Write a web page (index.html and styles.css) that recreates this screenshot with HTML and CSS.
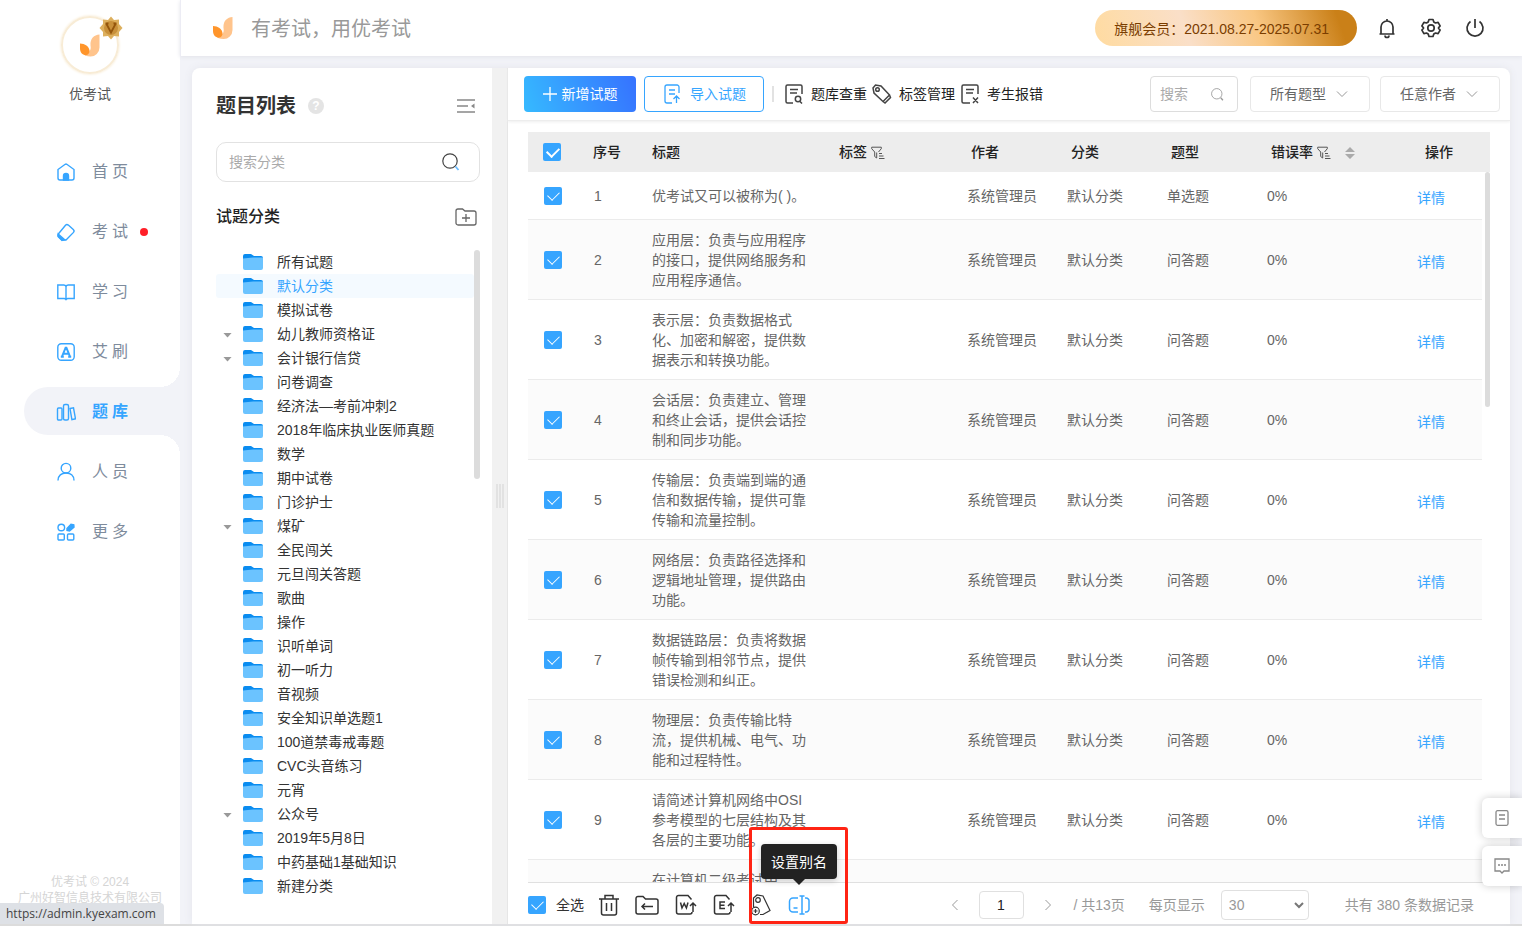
FILE: index.html
```html
<!DOCTYPE html>
<html lang="zh-CN">
<head>
<meta charset="utf-8">
<title>优考试 - 题库</title>
<link rel="stylesheet" href="styles.css">
</head>
<body>
<svg class="defs" aria-hidden="true">
  <symbol id="logo" viewBox="0 0 20 22"><path d="M19.500 0v13a9 9 0 0 1-9.200 9C7 22 4 21 3 19c6 .5 8.500-3 7.500-8C10 4 14 .5 19.500 0z" fill="#ffc48c"/><path d="M0 9c5 0 9 3 9.500 7 .2 2-.8 4-3 4.600C2.500 21 0 18 0 14z" fill="#ff952b"/></symbol>
  <symbol id="folder" viewBox="0 0 20 16"><path d="M0 2a2 2 0 0 1 2-2h6l3 2h7a2 2 0 0 1 2 2v5H0z" fill="#0a8cf0"/><path d="M0 4.500L10 3.500H20V14a2 2 0 0 1-2 2H2a2 2 0 0 1-2-2z" fill="#6bc3ff"/></symbol>
  <symbol id="filter" viewBox="0 0 14 14"><path d="M.7 1.200h9.600v1.500L7.500 6M.7 1.200v1.500l3 3.300v4.500l2 1.500V6.500M8 7.500h3M8 10h4.500M8 12.500h5.500" fill="none" stroke="#555"/></symbol>
  <symbol id="chevron" viewBox="0 0 12 12"><path d="M1 3.500l5 5 5-5" fill="none" stroke="#999"/></symbol>
  <symbol id="search" viewBox="0 0 18 18"><circle cx="8" cy="8" r="7.200" fill="none" stroke="currentColor" stroke-width="1.200"/><path d="M13.500 13.500l3 3.500" stroke="var(--handle, currentColor)" stroke-width="1.800"/></symbol>
</svg>
<div class="app">
  <aside class="sidebar">
    <div class="profile">
      <div class="avatar">
        <svg class="avatar-logo"><use href="#logo"/></svg>
        <svg class="badge" viewBox="0 0 24 24"><path d="M12 .5l3 3.500 5-.5v4.500l3.500 4-3.500 4v4.500l-5-.5-3 3.500-3-3.500-5 .5V16L.5 12 4 8V3.500l5 .5z" fill="#ddb05e"/><circle cx="12" cy="12" r="7" fill="#c8903a"/><path d="M7.500 8l4.500 8.500L16.500 8M6.500 7.500h3M14.500 7.500h3" fill="none" stroke="#94560c" stroke-width="1.800"/></svg>
      </div>
      <span class="profile-name">优考试</span>
    </div>
    <nav class="nav">
      <a href="#" class="nav-item"><svg viewBox="0 0 20 20"><path d="M2 7.500v8.500a2 2 0 0 0 2 2h12a2 2 0 0 0 2-2V7.500L10.800 2.300a1.500 1.500 0 0 0-1.600 0z"/><path d="M7.500 18v-4a2.500 2.500 0 0 1 5 0v4z" class="solid"/></svg><span>首页</span></a>
      <a href="#" class="nav-item"><svg viewBox="0 0 20 20"><path d="M9.500 3.300a2 2 0 0 1 2.800-.2l5 4.500a2 2 0 0 1 .2 2.800L10 18H6l-3.500-3.500a2 2 0 0 1 0-2.700z"/><path d="M2.200 12l6.500 5.700L6 18.500 2 14.500z" class="solid"/></svg><span>考试</span><i class="dot"></i></a>
      <a href="#" class="nav-item"><svg viewBox="0 0 20 20"><path d="M1.800 3h5.700A2.500 2.500 0 0 1 10 4.500 2.500 2.500 0 0 1 12.500 3h5.700v13.500h-5.700a2.500 2.500 0 0 0-2.500 1 2.500 2.500 0 0 0-2.500-1H1.800zM10 4.500V18"/></svg><span>学习</span></a>
      <a href="#" class="nav-item"><svg viewBox="0 0 20 20"><rect x="1.800" y="1.800" width="16.400" height="16.400" rx="3.500"/><path d="M6 14.700l3.600-9h.8l3.600 9M7.300 11.700h5.400M4.800 14.700h3M12.200 14.700h3" stroke-width="2"/></svg><span>艾刷</span></a>
      <a href="#" class="nav-item active"><svg viewBox="0 0 20 20"><rect x="1.500" y="6" width="4.500" height="12" rx="1"/><rect x="7.500" y="2.500" width="5" height="15.500" rx="1.500"/><path d="M14 6.500l3.500-.7 2 11-3.600.9z"/></svg><span>题库</span></a>
      <a href="#" class="nav-item"><svg viewBox="0 0 20 20"><circle cx="10" cy="6.200" r="4.800"/><path d="M2 18.500c0-5 3.500-7.500 8-7.500s8 2.500 8 7.500"/></svg><span>人员</span></a>
      <a href="#" class="nav-item"><svg viewBox="0 0 20 20"><circle cx="5.300" cy="5.500" r="3.300"/><rect x="2" y="12" width="6.300" height="6" rx="1"/><rect x="11.500" y="12" width="6.300" height="6" rx="1"/><path d="M11 6.500L15 2.300l2.800.5.2 2.400L13.500 9 11 8.500z" class="solid"/></svg><span>更多</span></a>
    </nav>
    <footer class="copyright">优考试 © 2024<br>广州好智信息技术有限公司</footer>
  </aside>

  <header class="topbar">
    <svg class="top-logo"><use href="#logo"/></svg>
    <span class="slogan">有考试，用优考试</span>
    <span class="member">旗舰会员：2021.08.27-2025.07.31</span>
    <button class="top-icon" aria-label="通知"><svg viewBox="0 0 22 22"><path d="M5 16.500V10a6 6 0 0 1 12 0v6.500M3.500 17h15M11 2v2M9 18.500a2 2 0 0 0 4 0"/></svg></button>
    <button class="top-icon" aria-label="设置"><svg viewBox="0 0 22 22"><path d="M9 2.500h4l.8 2.500 1.700 1 2.600-.6 2 3.500L18.400 11l1.700 2.100-2 3.500-2.600-.6-1.700 1-.8 2.500H9L8.200 17l-1.700-1-2.600.6-2-3.500L3.600 11 1.900 8.900l2-3.500 2.600.6 1.700-1z" stroke-linejoin="round"/><circle cx="11" cy="11" r="3.200"/></svg></button>
    <button class="top-icon" aria-label="退出"><svg viewBox="0 0 22 22"><path d="M11 2V11M6.500 4.500a8 8 0 1 0 9 0"/></svg></button>
  </header>

  <main class="workspace">
    <section class="tree-panel">
      <div class="panel-title"><h1>题目列表</h1><button class="help" aria-label="帮助">?</button>
        <button class="plain push" aria-label="收起"><svg class="i20" viewBox="0 0 20 20"><path d="M1 4h18M1 10h11M1 16h18" stroke="#888" stroke-width="1.500"/><path d="M18.500 7.500v5L15 10z" fill="#888"/></svg></button></div>
      <label class="tree-search"><input type="text" placeholder="搜索分类" aria-label="搜索分类"><svg><use href="#search"/></svg></label>
      <div class="sub-title"><h2>试题分类</h2><button class="plain" aria-label="新建分类"><svg class="i22" viewBox="0 0 22 18"><path d="M1 3a2 2 0 0 1 2-2h4.500l2.500 2h9a2 2 0 0 1 2 2V15a2 2 0 0 1-2 2H3a2 2 0 0 1-2-2zM11 6v8M7 10h8" fill="none" stroke="#666" stroke-width="1.300"/></svg></button></div>
      <div class="tree-wrap">
        <ul class="tree" id="tree"></ul>
        <i class="thumb tree-thumb"></i>
      </div>
    </section>
    <div class="splitter"><i></i><i></i><i></i></div>
    <section class="list-panel">
      <div class="toolbar">
        <button class="btn primary"><svg class="i14" viewBox="0 0 14 14"><path d="M7 0v14M0 7h14" stroke="#fff" stroke-width="1.300"/></svg>新增试题</button>
        <button class="btn outline"><svg class="i20" viewBox="0 0 20 20"><path d="M17 9V3a2 2 0 0 0-2-2H5a2 2 0 0 0-2 2v14a2 2 0 0 0 2 2h5M7 6h6M7 10h6M14.500 19v-7M11.500 15l3-3 3 3" fill="none" stroke="#36a5ff" stroke-width="1.300"/></svg>导入试题</button>
        <i class="divider"></i>
        <button class="tool"><svg class="i20" viewBox="0 0 20 20"><path d="M18 10V2.500A1.500 1.500 0 0 0 16.500 1h-13A1.500 1.500 0 0 0 2 2.500v15A1.500 1.500 0 0 0 3.500 19H9M6 5.500h8M6 9h7M15.500 17l2.500 2.500" /><circle cx="14" cy="15" r="2.700"/></svg>题库查重</button>
        <button class="tool"><svg class="i20" viewBox="0 0 20 20"><path d="M1 4l2.500-3L9 2l8.500 9L11 17.500 2 9zM17.500 11l1 2.500-5.500 5.500-2-1.500"/><circle cx="5.500" cy="5.500" r="1.800"/></svg>标签管理</button>
        <button class="tool"><svg class="i20" viewBox="0 0 20 20"><path d="M18 10V2.500A1.500 1.500 0 0 0 16.500 1h-13A1.500 1.500 0 0 0 2 2.500v15A1.500 1.500 0 0 0 3.500 19H10M6 5.500h8M6 9h7M13 13.500l5 5.500M18 13.500L13 19"/></svg>考生报错</button>
        <label class="field small"><input type="text" placeholder="搜索" aria-label="搜索"><svg><use href="#search"/></svg></label>
        <label class="field"><select aria-label="题型"><option>所有题型</option></select><svg><use href="#chevron"/></svg></label>
        <label class="field last"><select aria-label="作者"><option>任意作者</option></select><svg><use href="#chevron"/></svg></label>
      </div>
      <div class="table-wrap">
        <table>
          <colgroup><col class="c-check"><col class="c-no"><col class="c-title"><col><col class="c-std"><col class="c-std"><col class="c-std"><col class="c-rate"><col class="c-op"><col class="c-gutter"></colgroup>
          <thead><tr><th class="check"><input type="checkbox" checked aria-label="选择本页"></th><th>序号</th><th>标题</th><th>标签 <svg class="filter"><use href="#filter"/></svg></th><th class="in">作者</th><th class="in">分类</th><th class="in">题型</th><th class="in">错误率 <svg class="filter"><use href="#filter"/></svg><svg class="sort" viewBox="0 0 10 12"><path d="M5 0l5 5H0zM5 12L0 7h10z" fill="#aaa"/></svg></th><th class="in2">操作</th><th></th></tr></thead>
          <tbody id="rows"></tbody>
        </table>
        <i class="thumb table-thumb"></i>
      </div>
      <div class="footer">
        <label class="all"><input type="checkbox" checked>全选</label>
        <button class="act" aria-label="删除"><svg viewBox="0 0 24 24"><path d="M2 6h20M8 6V2.500h8V6M4.500 6v14a2 2 0 0 0 2 2h11a2 2 0 0 0 2-2V6M9.500 10v8M14.500 10v8"/></svg></button>
        <button class="act" aria-label="移动"><svg viewBox="0 0 24 24"><path d="M1 5.500a2 2 0 0 1 2-2h5L10.500 6H21a2 2 0 0 1 2 2v11a2 2 0 0 1-2 2H3a2 2 0 0 1-2-2zM7 13.500h11M10 10.500l-3 3 3 3"/></svg></button>
        <button class="act" aria-label="导出 Word"><svg viewBox="0 0 24 24"><path d="M18.500 6.500L15 2.500H5.500a2 2 0 0 0-2 2V19a2 2 0 0 0 2 2H17a2 2 0 0 0 2-2M20 19v-9M17 13l3-3 3 3M7.500 9.500l1.500 5.500 2.200-4.500 2.200 4.500L15 9.500"/></svg></button>
        <button class="act" aria-label="导出 Excel"><svg viewBox="0 0 24 24"><path d="M18.500 6.500L15 2.500H5.500a2 2 0 0 0-2 2V19a2 2 0 0 0 2 2H17a2 2 0 0 0 2-2M20 19v-9M17 13l3-3 3 3M14 9H9v6.500h5M9 12.200h4.500"/></svg></button>
        <button class="act thin" aria-label="设置标签"><svg viewBox="0 0 24 24"><path d="M4.500 14V5L8 2l6 1 7 14.500L14 21.500h-3"/><circle cx="9" cy="7" r="2.300"/><circle cx="6.500" cy="18" r="3.800"/><path d="M6.500 16v4M4.500 18h4"/></svg></button>
        <button class="act on" aria-label="设置别名"><svg viewBox="0 0 24 24"><path d="M11 5H6a3.500 3.500 0 0 0-3.500 3.500v7A3.500 3.500 0 0 0 6 19h5M6.500 15h4M18 5h1a3 3 0 0 1 3 3.500v7a3 3 0 0 1-3 3.500h-1M15 3v18M12.500 3h5M12.500 21h5"/></svg><span class="tooltip">设置别名</span><i class="mark"></i></button>
        <div class="pager">
          <button class="plain" aria-label="上一页"><svg class="i12 prev"><use href="#chevron"/></svg></button>
          <input class="page" type="text" value="1" aria-label="页码">
          <button class="plain" aria-label="下一页"><svg class="i12 next"><use href="#chevron"/></svg></button>
          <span class="pages">/ 共13页</span>
          <label class="size">每页显示<span class="size-box"><select><option>30</option></select><svg viewBox="0 0 10 10"><path d="M1 3l4 4 4-4" fill="none" stroke="#777" stroke-width="2"/></svg></span></label>
          <span class="total">共有 380 条数据记录</span>
        </div>
      </div>
    </section>
  </main>
</div>
<div class="float">
  <button aria-label="文档"><svg viewBox="0 0 16 16"><rect x="2" y=".7" width="12" height="14.600" rx="1.500"/><path d="M5 5h6M5 9h6"/></svg></button>
  <button aria-label="消息"><svg viewBox="0 0 16 16"><path d="M1 1h14v12h-5l-2 2-2-2H1zM4 7h2M7 7h2M10 7h2"/></svg></button>
</div>
<div class="status">https://admin.kyexam.com</div>
<script src="app.js"></script>
</body>
</html>
```
FILE: styles.css
```css
* { box-sizing: border-box; }
body { margin: 0; height: 100vh; overflow: hidden; background: #dcdcdc; color: #333; font: 14px/20px "Liberation Sans", "Noto Sans CJK SC", sans-serif; }
button, input, select { font: inherit; color: inherit; margin: 0; }
button { border: 0; padding: 0; background: none; cursor: pointer; }
a { text-decoration: none; color: #36a5ff; }
h1, h2, ul { margin: 0; padding: 0; }
svg { display: block; flex: none; }
.defs { position: absolute; width: 0; height: 0; }
.i12 { width: 12px; height: 12px; }
.i14 { width: 14px; height: 14px; }
.i20 { width: 20px; height: 20px; }
.i22 { width: 22px; height: 18px; }

.app { display: grid; grid-template: 56px 1fr / 180px 1fr; height: calc(100vh - 2px); background: #f2f3f8; }

.sidebar { grid-row: 1 / 3; display: flex; flex-direction: column; background: #fff; min-height: 0; }
.profile { display: flex; flex-direction: column; align-items: center; gap: 10px; padding-top: 16px; height: 147px; }
.avatar { position: relative; display: grid; place-items: center; width: 58px; height: 58px; border: 2px solid #f8ecd6; border-radius: 50%; box-shadow: 0 0 2px 1px #fbf3e4; }
.avatar-logo { width: 20px; height: 25px; }
.badge { position: absolute; top: -2px; right: -6px; width: 24px; height: 24px; }
.profile-name { color: #555; }
.nav { display: flex; flex-direction: column; gap: 12px; }
.nav-item { position: relative; display: flex; align-items: center; height: 48px; margin-left: 24px; padding: 2px 0 0 32px; border-radius: 24px 0 0 24px; color: #7e8b9c; font-size: 16px; letter-spacing: 4px; }
.nav-item svg { width: 20px; height: 20px; margin-right: 16px; fill: none; stroke: #36a5ff; stroke-width: 1.400; }
.nav-item .solid { fill: #36a5ff; }
.nav-item.active { background: #f2f3f8; color: #36a5ff; font-weight: 700; }
.nav-item.active::before, .nav-item.active::after { content: ""; position: absolute; right: 0; width: 20px; height: 20px; }
.nav-item.active::before { top: -20px; background: radial-gradient(circle at 0 0, #fff 20px, #f2f3f8 20px); }
.nav-item.active::after { bottom: -20px; background: radial-gradient(circle at 0 100%, #fff 20px, #f2f3f8 20px); }
.dot { width: 8px; height: 8px; margin-left: 8px; border-radius: 50%; background: #ff1f28; }
.copyright { margin-top: auto; padding-bottom: 18px; color: #d5d5d5; font-size: 12px; line-height: 16px; text-align: center; white-space: nowrap; }

.topbar { display: flex; align-items: center; padding: 0 36px 0 32px; background: #fff; border-left: 1px solid #ececf4; box-shadow: 0 1px 4px #e2e3ea; z-index: 1; }
.top-logo { width: 20px; height: 22px; }
.slogan { margin: 2px 0 0 18px; font-size: 20px; line-height: 28px; color: #999; }
.member { margin-left: auto; margin-right: 19px; padding: 2px 28px 0 19px; border-radius: 18px; line-height: 34px; color: #7a3d00; background: linear-gradient(70deg, #ffdba0, #fadfc8 35%, #f9c783 62%, #ca8018 92%); white-space: nowrap; }
.top-icon { width: 22px; height: 22px; margin-right: 22px; }
.top-icon:last-child { margin-right: 0; }
.top-icon svg { width: 22px; height: 22px; fill: none; stroke: #333; stroke-width: 1.700; }

.workspace { display: flex; min-width: 0; min-height: 0; margin: 12px 12px 0; border-radius: 8px 8px 0 0; background: #fff; box-shadow: 0 0 8px #e4e5ec; }
.tree-panel { display: flex; flex-direction: column; flex: none; width: 300px; min-height: 0; padding: 0 12px 0 24px; }
.panel-title { display: flex; align-items: center; height: 74px; padding-top: 2px; }
h1 { font-size: 20px; line-height: 28px; }
.help { width: 16px; height: 16px; margin-left: 12px; border-radius: 50%; background: #e4e4e4; color: #fff; font-size: 12px; line-height: 16px; font-weight: 700; }
.push { margin-left: auto; margin-right: 4px; }
.tree-search { display: flex; align-items: center; height: 40px; padding: 0 19px 0 12px; border: 1px solid #e2e2e2; border-radius: 10px; }
input[type="text"] { min-width: 0; flex: 1; border: 0; padding: 0; outline: 0; background: none; }
input::placeholder { color: #aaa; opacity: 1; }
.tree-search svg { width: 18px; height: 18px; color: #444; --handle: #6bbcff; }
.sub-title { display: flex; align-items: center; justify-content: space-between; height: 68px; padding: 2px 3px 0 0; }
h2 { font-size: 16px; line-height: 24px; font-weight: 500; color: #222; }
.tree-wrap { position: relative; flex: 1; min-height: 0; }
.tree { list-style: none; margin-right: 6px; }
.tree li { display: flex; align-items: center; height: 24px; padding-left: 27px; border-radius: 3px; white-space: nowrap; }
.tree li.selected { background: #f4faff; }
.tree li a { display: flex; align-items: center; gap: 14px; color: #333; }
.tree li.selected a { color: #36a5ff; }
.tree a svg { width: 20px; height: 16px; }
.tree .toggle { width: 9px; height: 5px; margin: 2px 11px 0 -20px; background: #999; clip-path: polygon(0 0, 100% 0, 50% 100%); }
.thumb { position: absolute; border-radius: 3px; background: #dcdcdc; }
.tree-thumb { top: 0; right: 0; width: 6px; height: 34%; }
.splitter { display: flex; align-items: center; justify-content: center; gap: 1px; flex: none; width: 16px; background: #f1f1f1; border-right: 1px solid #e6e6e6; }
.splitter i { width: 2px; height: 24px; background: #e2e2e2; }

.list-panel { display: flex; flex-direction: column; flex: 1; min-width: 0; min-height: 0; }
.toolbar { display: flex; align-items: center; flex: none; height: 53px; padding: 0 10px 0 16px; border-bottom: 1px solid #ededed; box-shadow: 0 1px 3px #eee; white-space: nowrap; }
.btn { display: flex; align-items: center; justify-content: center; height: 36px; border-radius: 4px; }
.btn.primary { width: 112px; margin-right: 8px; gap: 5px; color: #fff; background: linear-gradient(70deg, #36baff, #3672ff); }
.btn.outline { width: 120px; gap: 8px; color: #36a5ff; border: 1px solid #36a5ff; }
.divider { width: 2px; height: 16px; margin: 0 10px 0 8px; background: #e2e2e2; }
.tool { display: flex; align-items: center; gap: 7px; margin-right: 5px; color: #222; }
.tool svg { fill: none; stroke: #444; stroke-width: 1.500; }
.field { position: relative; display: flex; align-items: center; width: 120px; height: 36px; margin-left: 10px; border: 1px solid #e8e8e8; border-radius: 4px; color: #666; }
.field.small { width: 88px; margin-left: auto; margin-right: 2px; padding: 0 13px 0 9px; border-color: #ddd; }
.field.small svg { width: 13px; height: 13px; color: #999; }
.field select { width: 100%; height: 100%; padding: 0 0 0 19px; border: 0; background: none; appearance: none; outline: 0; }
.field select + svg { position: absolute; right: 21px; width: 12px; height: 12px; pointer-events: none; }

.table-wrap { position: relative; flex: 1; min-height: 0; margin: 11px 20px 0; overflow: hidden; }
table { width: 100%; border-collapse: separate; border-spacing: 0; table-layout: fixed; }
.c-check { width: 65px; } .c-no { width: 59px; } .c-title { width: 187px; } .c-std { width: 100px; } .c-rate { width: 150px; } .c-op { width: 65px; } .c-gutter { width: 8px; }
th, td { padding: 0; text-align: left; white-space: nowrap; }
thead tr { height: 40px; background: #ededed; }
th { font-weight: 500; color: #222; }
th.in { padding-left: 4px; }
th.in2 { padding-left: 8px; }
th svg { display: inline-block; vertical-align: middle; }
.filter { width: 14px; height: 14px; }
.sort { width: 10px; height: 12px; margin-left: 14px; }
tbody tr { height: 48px; }
td { padding: 10px 0 9px; color: #666; }
td:not(:last-child) { border-bottom: 1px solid #ebebeb; }
tbody tr:nth-child(even) td:not(:last-child) { background: #fbfbfb; }
td:nth-child(2) { padding-left: 1px; }
td:nth-child(3) { padding-right: 26px; white-space: normal; }
td a { display: inline-block; padding-top: 4px; }
input[type="checkbox"] { appearance: none; display: block; width: 18px; height: 18px; border-radius: 2px; background: #36a5ff; }
input[type="checkbox"]::before { content: ""; display: block; width: 10px; height: 6px; margin: 4px 0 0 4px; border: solid #fff; border-width: 0 0 1px 1px; rotate: -45deg; }
th.check { padding-left: 15px; }
th.check input::before { border-width: 0 0 2px 2px; }
td.check { padding-left: 16px; }
.table-thumb { top: 40px; right: 0; width: 5px; height: 235px; }

.footer { display: flex; align-items: center; flex: none; height: 42px; margin-left: 20px; padding: 2px 36px 0 0; border-top: 1px solid #e0e0e0; white-space: nowrap; }
.all { display: flex; align-items: center; gap: 10px; margin-right: 6px; }
.act { position: relative; display: grid; place-items: center; width: 38px; height: 30px; }
.act svg { width: 24px; height: 24px; fill: none; stroke: #333; stroke-width: 1.500; }
.act.thin svg { stroke-width: 1.200; }
.act.on svg { stroke: #36a5ff; }
.tooltip { position: absolute; bottom: 41px; left: 50%; translate: -50% 0; z-index: 3; padding: 8px 10px 7px; border-radius: 4px; background: #222; color: #fff; box-shadow: 0 2px 6px #0003; }
.tooltip::after { content: ""; position: absolute; top: 100%; left: 50%; margin-left: -6px; border: 6px solid transparent; border-top-color: #222; border-bottom: 0; }
.mark { position: absolute; left: -31px; bottom: -4px; z-index: 2; width: 99px; height: 97px; border: 3px solid #ff2414; border-radius: 3px; pointer-events: none; }
.pager { display: flex; align-items: center; margin-left: auto; color: #999; }
.prev { rotate: 90deg; }
.next { rotate: -90deg; }
.pager .page { flex: none; width: 45px; height: 28px; margin: 0 18px; border: 1px solid #e0e0e0; border-radius: 4px; text-align: center; color: #222; }
.pages { margin: 0 24px 0 20px; }
.size { display: flex; align-items: center; gap: 16px; }
.size-box { position: relative; display: flex; align-items: center; }
.size select { width: 88px; height: 30px; padding: 0 7px; border: 1px solid #e0e0e0; border-radius: 4px; background: none; appearance: none; }
.size svg { position: absolute; right: 5px; width: 10px; height: 10px; pointer-events: none; }
.total { margin-left: 36px; }

.float { position: fixed; right: 0; bottom: 40px; z-index: 4; display: grid; gap: 8px; }
.float button { display: grid; place-items: center; width: 40px; height: 40px; border-radius: 6px 0 0 6px; background: #fff; box-shadow: 0 0 8px #0003; }
.float svg { width: 16px; height: 16px; fill: none; stroke: #888; stroke-width: 1.300; }
.status { position: fixed; left: 0; bottom: 2px; z-index: 4; padding: 0 8px 0 6px; border-radius: 0 4px 0 0; background: #dee1e6; color: #444; font: 12px/21px "Open Sans", "Noto Sans", sans-serif; }
```
FILE: app.js
```js
const folders = ["所有试题", "默认分类", "模拟试卷", "幼儿教师资格证", "会计银行信贷", "问卷调查", "经济法—考前冲刺2", "2018年临床执业医师真题", "数学", "期中试卷", "门诊护士", "煤矿", "全民闯关", "元旦闯关答题", "歌曲", "操作", "识听单词", "初一听力", "音视频", "安全知识单选题1", "100道禁毒戒毒题", "CVC头音练习", "元宵", "公众号", "2019年5月8日", "中药基础1基础知识", "新建分类"];
const expandable = ["幼儿教师资格证", "会计银行信贷", "煤矿", "公众号"];
document.getElementById("tree").innerHTML = folders.map((name) =>
  `<li${name === "默认分类" ? ' class="selected"' : ""}>${expandable.includes(name) ? `<button class="toggle" aria-label="展开${name}"></button>` : ""}<a href="#"><svg><use href="#folder"/></svg>${name}</a></li>`
).join("");

const questions = [
  "优考试又可以被称为( )。",
  "应用层：负责与应用程序的接口，提供网络服务和应用程序通信。",
  "表示层：负责数据格式化、加密和解密，提供数据表示和转换功能。",
  "会话层：负责建立、管理和终止会话，提供会话控制和同步功能。",
  "传输层：负责端到端的通信和数据传输，提供可靠传输和流量控制。",
  "网络层：负责路径选择和逻辑地址管理，提供路由功能。",
  "数据链路层：负责将数据帧传输到相邻节点，提供错误检测和纠正。",
  "物理层：负责传输比特流，提供机械、电气、功能和过程特性。",
  "请简述计算机网络中OSI参考模型的七层结构及其各层的主要功能。"
];
const row = (title, i) => `<tr><td class="check"><input type="checkbox" checked aria-label="选择第${i + 1}题"></td><td>${i + 1}</td><td>${title}</td><td></td><td>系统管理员</td><td>默认分类</td><td>${i ? "问答题" : "单选题"}</td><td>0%</td><td><a href="#">详情</a></td><td></td></tr>`;
document.getElementById("rows").innerHTML = questions.map(row).join("") +
  '<tr valign="top"><td></td><td></td><td>在计算机二级考试中</td><td></td><td></td><td></td><td></td><td></td><td></td><td></td></tr>';
```
